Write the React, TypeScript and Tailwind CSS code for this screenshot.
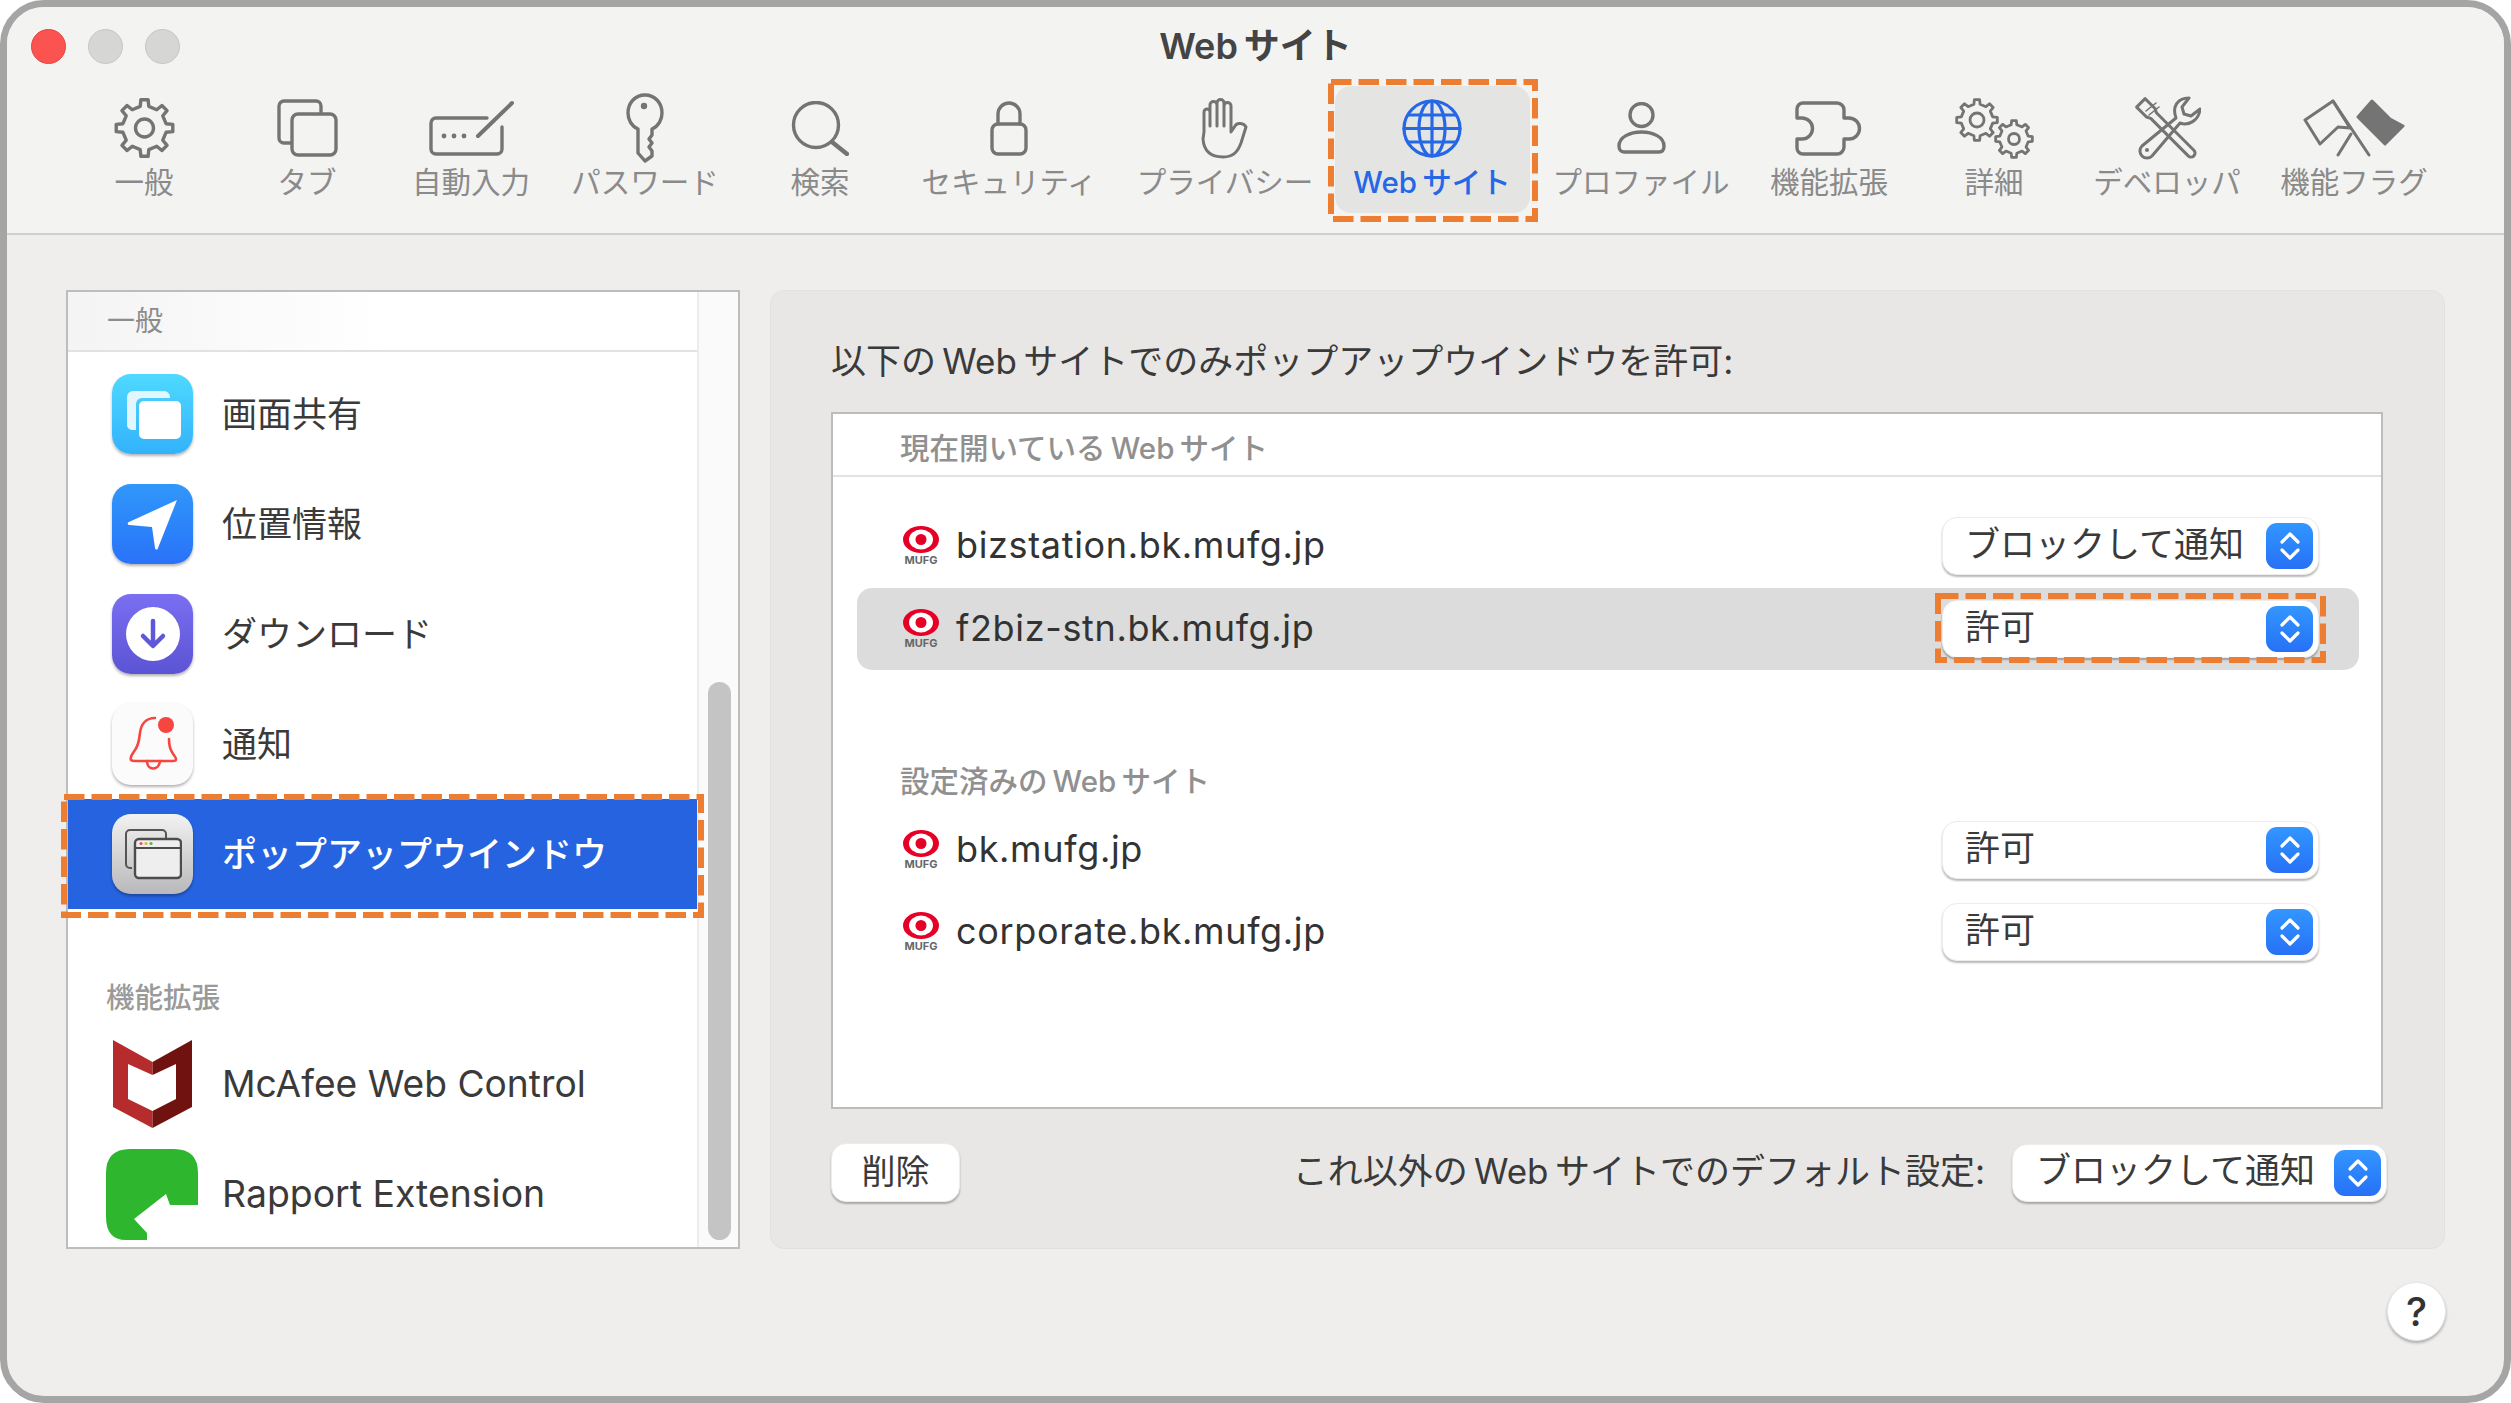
import type { ReactNode } from "react";

const FONT = 'font-["Inter","Noto_Sans_CJK_JP",sans-serif]';

const gear = (cx: number, cy: number, r1: number, r2: number, n: number) => {
  const w = (Math.PI / n) * 0.5;
  let d = "";
  for (let i = 0; i < n; i++) {
    const a = (i * 2 * Math.PI) / n - Math.PI / 2;
    const p = (r: number, t: number) =>
      `${(cx + r * Math.cos(t)).toFixed(2)} ${(cy + r * Math.sin(t)).toFixed(2)}`;
    d += `${i ? "L" : "M"}${p(r1, a - w)} L${p(r2, a - w * 0.65)} L${p(r2, a + w * 0.65)} L${p(r1, a + w)} `;
  }
  return d + "Z";
};

const GRAY = "#747474";

function Ico({ w, h, children, color = GRAY, sw = 3.4 }: { w: number; h: number; children: ReactNode; color?: string; sw?: number }) {
  return (
    <svg width={w} height={h} viewBox={`0 0 ${w} ${h}`} fill="none" stroke={color} strokeWidth={sw} strokeLinecap="round" strokeLinejoin="round">
      {children}
    </svg>
  );
}

const icons: Record<string, ReactNode> = {
  general: (
    <Ico w={61} h={60}>
      <path d={gear(30.5, 30, 22, 28.5, 8)} />
      <circle cx="30.5" cy="30" r="9" />
    </Ico>
  ),
  tabs: (
    <Ico w={61} h={58}>
      <path d="M44 13V7a5 5 0 0 0-5-5H7a5 5 0 0 0-5 5v32a5 5 0 0 0 5 5h7" />
      <rect x="15" y="15" width="44" height="41" rx="6" />
    </Ico>
  ),
  autofill: (
    <Ico w={85} h={56}>
      <path d="M58 18H7a5 5 0 0 0-5 5v26a5 5 0 0 0 5 5h61a5 5 0 0 0 5-5V27" />
      <path d="M49 36L83 3" strokeWidth={4} />
      <circle cx="15" cy="36" r="2.4" fill={GRAY} stroke="none" />
      <circle cx="25" cy="36" r="2.4" fill={GRAY} stroke="none" />
      <circle cx="35" cy="36" r="2.4" fill={GRAY} stroke="none" />
    </Ico>
  ),
  key: (
    <Ico w={38} h={70}>
      <path d="M12 36C5 33 2 26 2 20C2 10 9 2 19 2s17 8 17 18c0 6-3 13-10 16v6l-3 4 3 4-3 4 3 4v5L19 68l-7-8Z" />
      <circle cx="18" cy="13" r="3.2" fill={GRAY} stroke="none" />
    </Ico>
  ),
  search: (
    <Ico w={58} h={55}>
      <circle cx="25" cy="24" r="22.5" />
      <path d="M41 41L56 53" strokeWidth={4.4} />
    </Ico>
  ),
  lock: (
    <Ico w={38} h={55}>
      <rect x="2" y="23" width="34" height="30" rx="6" />
      <path d="M8 23V13a11 11 0 0 1 22 0v10" />
    </Ico>
  ),
  hand: (
    <Ico w={48} h={61} sw={3}>
      <path d="M3 34V14a3 3 0 0 1 6 0v14M9 28V7a3.2 3.2 0 0 1 7 0v21M16 28V5a3.2 3.2 0 0 1 7 0v23M23 28V8a3.2 3.2 0 0 1 7 0v26l4-6c2-4 9-3 11 1l-5 16c-3 8-7 14-18 14-10 0-19-4-20-18l1-7" />
    </Ico>
  ),
  globe: (
    <Ico w={60} h={59} color="#2568e6" sw={3.2}>
      <ellipse cx="30" cy="29.5" rx="28" ry="27.5" />
      <ellipse cx="30" cy="29.5" rx="13" ry="27.5" />
      <path d="M30 2v55M2 29.5h56M6 16h48M6 43h48" />
    </Ico>
  ),
  profile: (
    <Ico w={49} h={52}>
      <ellipse cx="24.5" cy="13" rx="11.5" ry="11.5" />
      <path d="M2 44C2 35 13 30 24.5 30S47 35 47 44c0 4-2 6-5 6H7c-3 0-5-2-5-6Z" />
    </Ico>
  ),
  ext: (
    <Ico w={68} h={55}>
      <path d="M8 2h34a7 7 0 0 1 7 7v8h5a10 10 0 0 1 0 21h-5v8a7 7 0 0 1-7 7H8a6 6 0 0 1-6-6V38h5a10 10 0 0 0 0-21H2V8a6 6 0 0 1 6-6Z" />
    </Ico>
  ),
  advanced: (
    <Ico w={79} h={61} sw={2.8}>
      <path d={gear(22, 22, 16, 20.5, 8)} />
      <circle cx="22" cy="22" r="7" />
      <path d={gear(59, 41, 14.5, 18.5, 8)} />
      <circle cx="59" cy="41" r="5.5" />
    </Ico>
  ),
  dev: (
    <Ico w={67} h={65} sw={3}>
      <g transform="rotate(-45 33 33)">
        <path d="M27 -4h12v14l-2 4v53a4 4 0 0 1-8 0V14l-2-4Z" />
      </g>
      <path d="M42 22L8 50a7 7 0 0 0 10 10L46 27c8 3 19-2 20-14l-9 7-7-2-2-7 7-9c-12 0-17 9-13 20Z" />
      <circle cx="13" cy="54" r="2" fill={GRAY} stroke="none" />
      <path d="M12 15l10-8M15 19l10-8" strokeWidth={1.6} />
    </Ico>
  ),
  flags: (
    <Ico w={102} h={58} sw={3}>
      <path d="M30 2L66 56" />
      <path d="M30 2L47 29L35 28L17 45L2 21Z" />
      <path d="M48 35L35 56" />
      <path fill={GRAY} stroke={GRAY} d="M69 2L55 18L82 45L100 27L87 20Z" />
    </Ico>
  ),
};

const tabs = [
  { key: "general", label: "一般", cls: "w-[144px]" },
  { key: "tabs", label: "タブ", cls: "w-[182px]" },
  { key: "autofill", label: "自動入力", cls: "w-[146px]" },
  { key: "key", label: "パスワード", cls: "w-[202px]" },
  { key: "search", label: "検索", cls: "w-[148px]" },
  { key: "lock", label: "セキュリティ", cls: "w-[230px]" },
  { key: "hand", label: "プライバシー", cls: "w-[202px]" },
  { key: "globe", label: "Web\u2009サイト", cls: "w-[212px]", active: true },
  { key: "profile", label: "プロファイル", cls: "w-[206px]" },
  { key: "ext", label: "機能拡張", cls: "w-[170px]" },
  { key: "advanced", label: "詳細", cls: "w-[160px]" },
  { key: "dev", label: "デベロッパ", cls: "w-[186px]" },
  { key: "flags", label: "機能フラグ", cls: "w-[188px]" },
];

function Dashed({ w, h, cls }: { w: number; h: number; cls: string }) {
  return (
    <svg width={w} height={h} className={`absolute pointer-events-none z-10 ${cls}`}>
      <rect x="3" y="3" width={w - 6} height={h - 6} fill="none" stroke="#ed7d31" strokeWidth="6" strokeDasharray="20.5 7" />
    </svg>
  );
}

function Mufg() {
  return (
    <div className="w-[36px] h-[41px] flex flex-col items-center shrink-0">
      <svg width="36" height="27" viewBox="0 0 36 27">
        <ellipse cx="18" cy="13.5" rx="18" ry="13.5" fill="#e60026" />
        <ellipse cx="18" cy="13.5" rx="12" ry="10" fill="#fff" />
        <circle cx="18" cy="13.5" r="5.5" fill="#e60026" />
      </svg>
      <span className="text-[11px] leading-[14px] font-bold text-[#666]">MUFG</span>
    </div>
  );
}

function Stepper() {
  return (
    <div className="w-[47px] h-[46px] rounded-[11px] bg-gradient-to-b from-[#3396ff] to-[#2870f6] flex items-center justify-center shrink-0">
      <svg width="22" height="32" viewBox="0 0 22 32" fill="none" stroke="#fff" strokeWidth="3.2" strokeLinecap="round" strokeLinejoin="round">
        <path d="M3 12L11 4l8 8M3 20l8 8 8-8" />
      </svg>
    </div>
  );
}

function Select({ value, cls = "w-[377px] pl-[22px]" }: { value: string; cls?: string }) {
  return (
    <div className={`${cls} h-[58px] bg-white rounded-[15px] border border-[#ececec] shadow-[0_2px_2px_rgba(0,0,0,0.28)] flex items-center justify-between pr-[5px] text-[35px] text-[#3a3a3a]`}>
      <span className="mb-[4px]">{value}</span>
      <Stepper />
    </div>
  );
}

function SiteRow({ host, value, selected }: { host: string; value: string; selected?: boolean }) {
  return (
    <div className={`relative h-[82px] flex items-center justify-between pl-[46px] pr-[40px] rounded-[15px] ${selected ? "bg-[#dcdcdc]" : ""}`}>
      <div className="flex items-center gap-[17px]">
        <Mufg />
        <span className="text-[36px] text-[#333] tracking-[0.65px] mb-[3px]">{host}</span>
      </div>
      <Select value={value} />
      {selected && <Dashed w={391} h={70} cls="right-[33px] top-[5px]" />}
    </div>
  );
}

function SideRow({ icon, label, selected }: { icon: ReactNode; label: string; selected?: boolean }) {
  return (
    <div className={`h-[110px] flex items-center pl-[44px] ${selected ? "bg-[#2563e0]" : ""}`}>
      <div className="w-[81px] h-[80px] shrink-0 flex items-center justify-center">{icon}</div>
      <span className={`ml-[29px] text-[35px] ${selected ? "text-white font-medium" : "text-[#3a3a3a]"}`}>{label}</span>
    </div>
  );
}

const sideIconBox = "w-[81px] h-[80px] rounded-[19px] shadow-[0_2px_3px_rgba(0,0,0,0.3)] flex items-center justify-center";

const shareIcon = (
  <div className={`${sideIconBox} bg-gradient-to-b from-[#4fd9ff] to-[#33b2fb]`}>
    <svg width="56" height="56" viewBox="0 0 56 56">
      <path d="M7 44a5 5 0 0 1-5-5V11a6 6 0 0 1 6-6h31a6 6 0 0 1 6 6v1H17a6 6 0 0 0-6 6v26Z" fill="#e2f6ff" />
      <rect x="14" y="15" width="42" height="38" rx="5" fill="#fff" />
    </svg>
  </div>
);

const locationIcon = (
  <div className={`${sideIconBox} bg-gradient-to-b from-[#3197fb] to-[#2a72f8]`}>
    <svg width="52" height="52" viewBox="0 0 52 52">
      <path d="M50 2L2 24a1.5 1.5 0 0 0 .5 3L25 29l3 21a1.5 1.5 0 0 0 3 0Z" fill="#fff" />
    </svg>
  </div>
);

const downloadIcon = (
  <div className={`${sideIconBox} bg-gradient-to-b from-[#7b6ef2] to-[#5b54d4]`}>
    <svg width="54" height="54" viewBox="0 0 54 54">
      <circle cx="27" cy="27" r="27" fill="#fff" />
      <path d="M27 14v24M17 29l10 10 10-10" fill="none" stroke="#5e57da" strokeWidth="4.5" strokeLinecap="round" strokeLinejoin="round" />
    </svg>
  </div>
);

const bellIcon = (
  <div className={`${sideIconBox} bg-[#fbfbfb] h-[82px]`}>
    <svg width="50" height="56" viewBox="0 0 50 56" fill="none" stroke="#f7453f" strokeWidth="2.6" strokeLinecap="round" strokeLinejoin="round">
      <path d="M27 2c-9 0-14 6-15 15-1 8-2 14-7 20-2 3-3 5-2 7 1 1 2 1 4 1h38c2 0 3 0 3-2 0-2-2-3-4-7-2-3-3-7-3-13" />
      <path d="M19 45c0 10 12 10 13 0" />
      <circle cx="38" cy="9" r="8" fill="#f7453f" stroke="none" />
    </svg>
  </div>
);

const popupIcon = (
  <div className={`${sideIconBox} bg-gradient-to-b from-[#f2f2f2] to-[#b9b9bb]`}>
    <svg width="58" height="52" viewBox="0 0 58 52">
      <path d="M8 40H6a4 4 0 0 1-4-4V6a4 4 0 0 1 4-4h32a4 4 0 0 1 4 4v4" fill="none" stroke="#555" strokeWidth="2" />
      <rect x="11" y="11" width="46" height="39" rx="4" fill="#eee" stroke="#4c4c4c" strokeWidth="2.4" />
      <path d="M11 20h46" stroke="#4c4c4c" strokeWidth="2" />
      <circle cx="17" cy="15.5" r="1.6" fill="#e4584e" />
      <circle cx="22" cy="15.5" r="1.6" fill="#e0b040" />
      <circle cx="27" cy="15.5" r="1.6" fill="#56b24e" />
    </svg>
  </div>
);

const mcafeeIcon = (
  <svg width="79" height="88" viewBox="0 0 79 88" className="shrink-0">
    <path d="M39.5 22L0 0v67l39.5 21Z" fill="#b62c2c" />
    <path d="M39.5 22L79 0v67L39.5 88Z" fill="#701210" />
    <path d="M15 24l24.5 11L63 24v35L39.5 71 15 59Z" fill="#fff" />
  </svg>
);

const rapportIcon = (
  <svg width="92" height="91" viewBox="0 0 92 91" className="shrink-0">
    <path d="M24 0H68Q92 0 92 24V56H64L60 45 28 70 41 84V91H20Q0 91 0 68V24Q0 0 24 0Z" fill="#2fb62f" />
  </svg>
);

export default function App() {
  return (
    <div className={`w-[2511px] h-[1403px] bg-white overflow-hidden ${FONT}`}>
      <div className="w-full h-full rounded-[44px] border-[7px] border-[#a5a5a5] bg-[#efeeec] overflow-hidden flex flex-col">
        {/* toolbar */}
        <div className="h-[228px] shrink-0 bg-[#f3f3f2] border-b-2 border-[#cfcfce]">
          <div className="h-[72px] pt-[6px] grid grid-cols-[1fr_auto_1fr] items-center">
            <div className="pl-[24px] flex gap-[22px]">
              <div className="w-[35px] h-[35px] rounded-full bg-[#fb5350] border border-[#e6443f]" />
              <div className="w-[35px] h-[35px] rounded-full bg-[#d6d6d5] border border-[#c6c6c5]" />
              <div className="w-[35px] h-[35px] rounded-full bg-[#d6d6d5] border border-[#c6c6c5]" />
            </div>
            <div className="text-[36px] font-semibold text-[#444]">{"Web\u2009サイト"}</div>
            <div />
          </div>
          <div className="flex h-[143px] pl-[65px]">
            {tabs.map((t) => (
              <div key={t.key} className={`relative shrink-0 flex flex-col items-center pt-[14px] ${t.cls}`}>
                {t.active && (
                  <>
                    <div className="absolute left-[9px] right-[8px] top-[7px] bottom-[9px] rounded-[16px] bg-[#e4e4e3]" />
                    <Dashed w={210} h={143} cls="left-[2px] top-0" />
                  </>
                )}
                <div className="relative h-[70px] flex items-center justify-center">{icons[t.key]}</div>
                <div className={`relative h-[38px] leading-[38px] whitespace-nowrap text-[29.5px] ${t.active ? "text-[#2568e6] font-medium" : "text-[#8a8a8a]"}`}>
                  {t.label}
                </div>
              </div>
            ))}
          </div>
        </div>

        <div className="flex pt-[55px] pl-[59px] gap-[30px] items-start">
          {/* sidebar list */}
          <div className="relative w-[674px] h-[959px] border-2 border-[#bdbdbd] bg-white flex">
            <div className="w-[629px] shrink-0 h-full overflow-hidden">
              <div className="h-[60px] bg-gradient-to-r from-[#f4f4f4] to-white to-50% border-b-2 border-[#e2e2e2] pl-[39px] flex items-center text-[28px] text-[#8c8c8c]">
                一般
              </div>
              <div className="pt-[7px]">
                <SideRow icon={shareIcon} label="画面共有" />
                <SideRow icon={locationIcon} label="位置情報" />
                <SideRow icon={downloadIcon} label="ダウンロード" />
                <SideRow icon={bellIcon} label="通知" />
                <SideRow icon={popupIcon} label="ポップアップウインドウ" selected />
              </div>
              <div className="mt-[69px] h-[40px] leading-[40px] pl-[38px] text-[28.5px] font-medium text-[#9a9a9a]">機能拡張</div>
              <div className="mt-[11px] h-[110px] flex items-center pl-[45px]">
                {mcafeeIcon}
                <span className="ml-[30px] text-[37.2px] text-[#3a3a3a]">McAfee Web Control</span>
              </div>
              <div className="h-[110px] flex items-center pl-[38px]">
                {rapportIcon}
                <span className="ml-[24px] text-[37.4px] text-[#3a3a3a]">Rapport Extension</span>
              </div>
            </div>
            <div className="flex-1 bg-[#fafafa] border-l-2 border-[#ececec] relative">
              <div className="absolute left-[9px] top-[390px] w-[23px] h-[558px] rounded-full bg-[#c4c4c4]" />
            </div>
            <Dashed w={643} h={124} cls="left-[-7px] top-[502px]" />
          </div>

          {/* right panel */}
          <div className="w-[1675px] h-[959px] rounded-[14px] bg-[#e8e7e5] border border-[#e2e1df] pl-[60px] pt-[48px]">
            <div className="h-[44px] leading-[44px] text-[35px] text-[#3a3a3a]">{"以下の\u2009Web\u2009サイトでのみポップアップウインドウを許可:"}</div>
            <div className="mt-[29px] w-[1552px] h-[697px] bg-white border-2 border-[#bcbcbc]">
              <div className="h-[63px] border-b-2 border-[#e2e2e2] pl-[67px] pt-[7px] flex items-center text-[29.5px] font-medium text-[#909090]">
                {"現在開いている\u2009Web\u2009サイト"}
              </div>
              <div className="pt-[28px] pl-[24px] pr-[22px]">
                <SiteRow host="bizstation.bk.mufg.jp" value="ブロックして通知" />
                <div className="h-px" />
                <SiteRow host="f2biz-stn.bk.mufg.jp" value="許可" selected />
                <div className="mt-[91px] mb-[8px] h-[40px] leading-[40px] pl-[43px] text-[29.5px] font-medium text-[#909090]">{"設定済みの\u2009Web\u2009サイト"}</div>
                <SiteRow host="bk.mufg.jp" value="許可" />
                <SiteRow host="corporate.bk.mufg.jp" value="許可" />
              </div>
            </div>
            <div className="mt-[34px] w-[1556px] flex items-center justify-between">
              <div className="w-[129px] h-[59px] bg-white rounded-[15px] border border-[#ececec] shadow-[0_2px_2px_rgba(0,0,0,0.28)] flex items-center justify-center text-[34px] text-[#3a3a3a]">
                <span className="mb-[3px]">削除</span>
              </div>
              <div className="flex items-center gap-[27px]">
                <span className="text-[35px] text-[#3a3a3a] mb-[3px]">{"これ以外の\u2009Web\u2009サイトでのデフォルト設定:"}</span>
                <Select value="ブロックして通知" cls="w-[375px] pl-[23px]" />
              </div>
            </div>
          </div>
        </div>

        <div className="flex justify-end pr-[58px] pt-[33px]">
          <div className="w-[59px] h-[59px] rounded-full bg-white border border-[#e8e8e8] shadow-[0_2px_3px_rgba(0,0,0,0.28)] flex items-center justify-center text-[40px] font-medium text-[#333]">
            ?
          </div>
        </div>
      </div>
    </div>
  );
}
